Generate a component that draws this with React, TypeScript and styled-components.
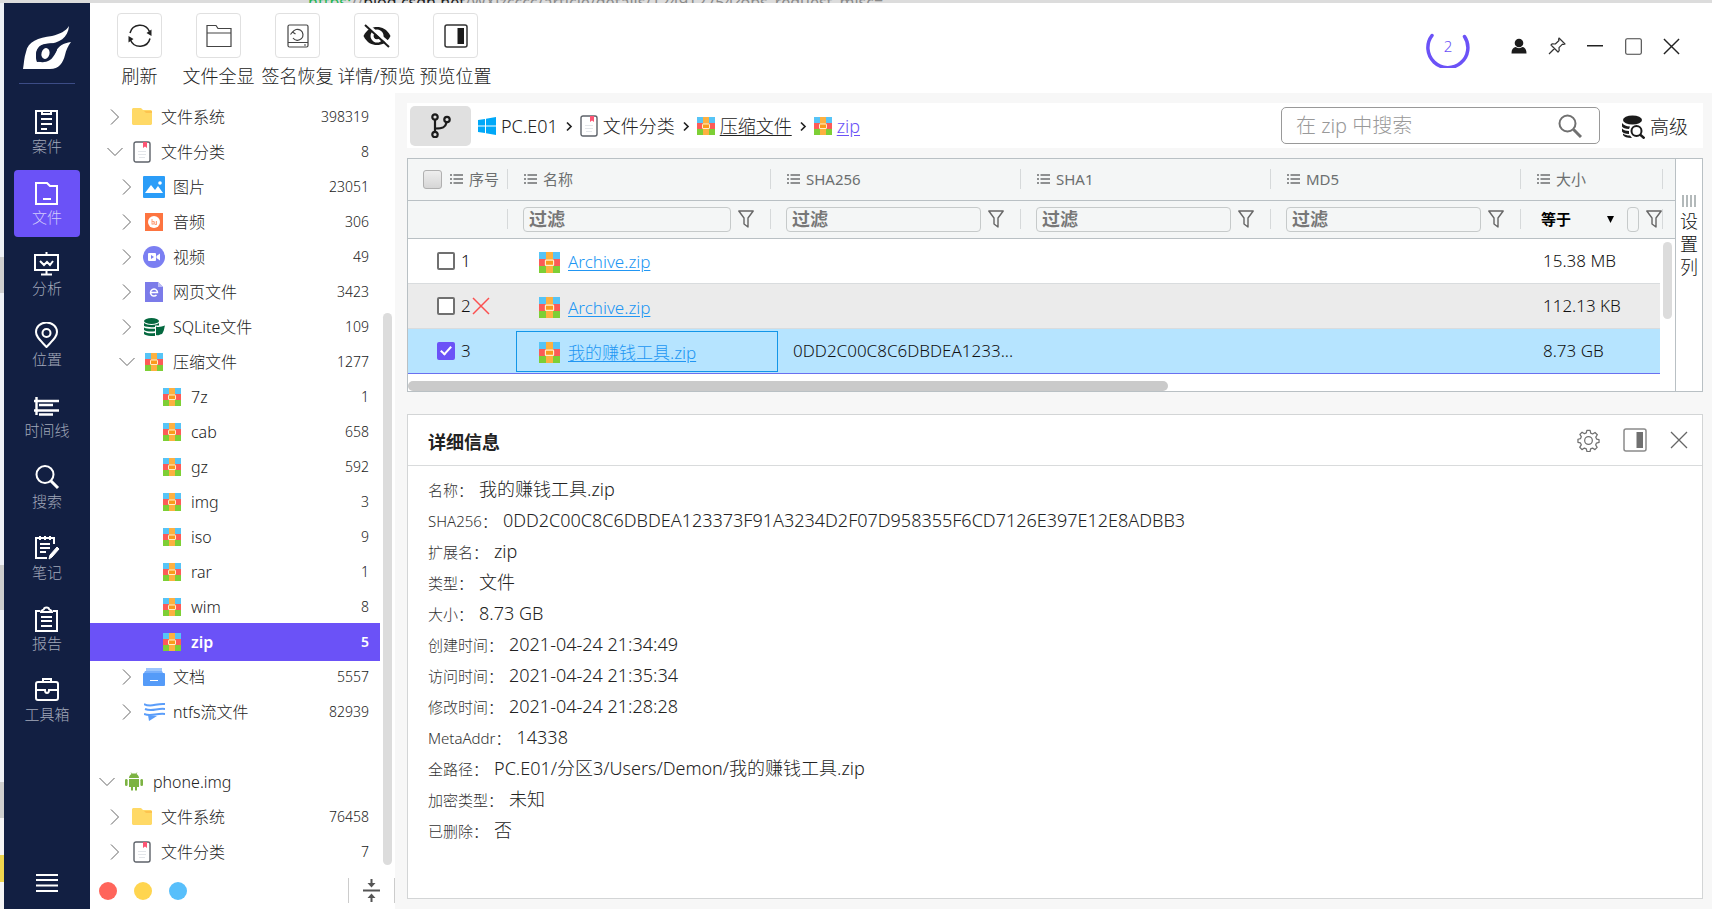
import React from "react";
import styled, { createGlobalStyle, css } from "styled-components";

const GlobalStyle = createGlobalStyle`
  *, *::before, *::after { box-sizing: border-box; }
  html, body, #root { height: 100%; }
  body {
    margin: 0;
    overflow: hidden;
    background: #eceff3;
    color: #222;
    font-family: "Noto Sans", "Noto Sans CJK SC", sans-serif;
    font-size: 17px;
    font-weight: 300;
    line-height: 24px;
  }
  button, input, select { font-family: inherit; font-weight: inherit; color: inherit; margin: 0; }
  button { background: none; border: 0; padding: 0; cursor: pointer; }
  a { color: inherit; }
  svg { display: block; flex: none; }
`;

/* ---------- shell ---------- */

const Desktop = styled.div`
  display: grid;
  grid-template-columns: 4px minmax(0, 1fr);
  grid-template-rows: 3px minmax(0, 1fr);
  height: 100vh;
`;

const BackdropTop = styled.div`
  grid-column: 1 / -1;
  display: flex;
  align-items: center;
  padding-left: 308px;
  overflow: hidden;
  background: #dcdcdc;
  color: #8a8a8a;
  font-size: 16px;
  font-weight: 400;
  line-height: 20px;
  white-space: nowrap;
`;
const Secure = styled.span`color: #1fb655;`;
const Host = styled.span`color: #222;`;

const BackdropLeft = styled.div`
  background: linear-gradient(
    #edf0f5 0 28%, #cfcfcf 28% 32%, #eef0f6 32% 62%, #cdcdcd 62% 67%,
    #eef0f6 67% 86%, #cfcfcf 86% 90%, #f5f5f5 90% 94%, #efd54e 94% 97%, #f5f5f5 97%
  );
`;

const Window = styled.div`
  display: grid;
  grid-template-columns: 86px minmax(0, 1fr);
  background: #fff;
  min-height: 0;
`;

/* ---------- left navigation ---------- */

const Nav = styled.nav`
  display: flex;
  flex-direction: column;
  align-items: center;
  background: #121f42;
  padding: 22px 0 14px;
`;
const Divider = styled.hr`
  width: 56px;
  margin: 12px 0 15px;
  border: 0;
  border-top: 1px solid #3c4c86;
`;
const NavList = styled.div`
  display: flex;
  flex-direction: column;
  gap: 4px;
  flex: 1;
`;
const NavButton = styled.button<{ $active?: boolean }>`
  display: flex;
  flex-direction: column;
  align-items: center;
  width: 66px;
  height: 67px;
  padding-top: 10px;
  border-radius: 4px;
  background: ${(p) => (p.$active ? "#6b52f7" : "transparent")};
  color: ${(p) => (p.$active ? "#d3ccfd" : "#a3a9ba")};
  font-size: 15px;
  line-height: 22px;
  white-space: nowrap;
`;

/* ---------- toolbar ---------- */

const Content = styled.div`
  display: flex;
  flex-direction: column;
  min-width: 0;
  min-height: 0;
`;
const Toolbar = styled.header`
  display: flex;
  justify-content: space-between;
  height: 90px;
  padding: 10px 32px 0 10px;
`;
const Tools = styled.div`display: flex;`;
const Tool = styled.button`
  display: flex;
  flex-direction: column;
  align-items: center;
  gap: 6px;
  width: 79px;
  font-size: 18px;
  line-height: 24px;
  white-space: nowrap;
`;
const ToolFrame = styled.span`
  display: grid;
  place-items: center;
  width: 45px;
  height: 45px;
  border: 1px solid #e0e0e0;
  border-radius: 4px;
`;
const WindowControls = styled.div`
  display: flex;
  align-items: center;
  gap: 20px;
  height: 66px;
`;
const IconButton = styled.button`
  display: grid;
  place-items: center;
  min-width: 18px;
  height: 24px;
`;
const Progress = styled.div`
  display: grid;
  place-items: center;
  width: 44px;
  height: 44px;
  margin-right: 20px;
  color: #6b52f7;
  font-size: 15px;
  > * { grid-area: 1 / 1; }
`;

/* ---------- tree ---------- */

const Work = styled.div`
  display: grid;
  grid-template-columns: 305px minmax(0, 1fr);
  flex: 1;
  min-height: 0;
`;
const TreePanel = styled.aside`
  display: flex;
  flex-direction: column;
  min-height: 0;
`;
const TreeScroll = styled.div`
  display: flex;
  flex: 1;
  min-height: 0;
  padding-top: 6px;
`;
const TreeList = styled.ul`
  flex: 1;
  margin: 0;
  padding: 0;
  list-style: none;
`;
const TreeRow = styled.li<{ $level: number; $active?: boolean; $after?: boolean }>`
  display: flex;
  align-items: center;
  height: 35px;
  padding: 0 11px 0 ${(p) => [9, 17, 29, 47][p.$level]}px;
  margin-top: ${(p) => (p.$after ? 35 : 0)}px;
  font-size: 16px;
  ${(p) =>
    p.$active &&
    css`
      height: 38px;
      margin: -1px 0 -2px;
      background: #6b52f7;
      color: #fff;
      font-weight: 600;
    `}
`;
const Twisty = styled.span`
  display: grid;
  place-items: center;
  width: 16px;
  height: 24px;
`;
const TreeIcon = styled.span`
  display: grid;
  place-items: center;
  width: 22px;
  margin: 0 8px;
`;
const TreeLabel = styled.span`flex: 1; white-space: nowrap;`;
const Count = styled.span`font-size: 14px;`;
const Track = styled.div`
  display: flex;
  flex-direction: column;
  justify-content: flex-end;
  width: 9px;
  margin: 0 3px;
  padding-bottom: 7px;
`;
const Thumb = styled.div`
  height: 72%;
  border-radius: 5px;
  background: #dcdcdc;
`;
const TreeFooter = styled.footer`
  display: flex;
  align-items: center;
  gap: 17px;
  height: 37px;
  padding-left: 9px;
`;
const Dot = styled.button<{ $color: string }>`
  width: 18px;
  height: 18px;
  border-radius: 50%;
  background: ${(p) => p.$color};
`;
const Collapse = styled.button`
  display: grid;
  place-items: center;
  width: 47px;
  height: 25px;
  margin-left: auto;
  border: solid #ccc;
  border-width: 0 1px;
`;

/* ---------- main column ---------- */

const Main = styled.main`
  display: flex;
  flex-direction: column;
  min-width: 0;
  padding: 10px 9px 10px 12px;
  background: #f7f7f7;
`;
const PathBar = styled.div`
  display: flex;
  align-items: center;
  height: 45px;
  padding: 0 15px 0 3px;
  background: #fff;
`;
const BranchButton = styled.button`
  display: grid;
  place-items: center;
  width: 61px;
  height: 40px;
  margin-right: 7px;
  border-radius: 5px;
  background: #e0e0e0;
`;
const Crumbs = styled.nav`
  display: flex;
  align-items: center;
  gap: 5px;
  flex: 1;
`;
const Crumb = styled.a<{ $tone?: "plain" | "link" | "current" }>`
  font-size: 18px;
  white-space: nowrap;
  text-decoration: ${(p) => (p.$tone === "plain" ? "none" : "underline")};
  text-underline-offset: 2px;
  color: ${(p) => (p.$tone === "current" ? "#6b52f7" : "#222")};
`;
const SearchBox = styled.label`
  display: flex;
  align-items: center;
  width: 319px;
  height: 37px;
  margin-right: 22px;
  padding: 0 17px 0 14px;
  border: 1px solid #999;
  border-radius: 5px;
`;
const SearchInput = styled.input`
  flex: 1;
  min-width: 0;
  border: 0;
  outline: 0;
  padding: 0;
  background: none;
  font-size: 20px;
  &::placeholder { color: #999; opacity: 1; }
`;
const Advanced = styled.button`
  display: flex;
  align-items: center;
  gap: 5px;
  padding-top: 2px;
  font-size: 19px;
  line-height: 26px;
`;

/* ---------- grid ---------- */

const GridBox = styled.section`
  display: flex;
  margin: 10px 0 22px;
  border: 1px solid #b9c0c4;
  background: #fff;
`;
const GridArea = styled.div`
  flex: 1;
  min-width: 0;
`;
const Table = styled.table`
  width: 100%;
  border-collapse: collapse;
  table-layout: fixed;
`;
const HeadRow = styled.tr<{ $filter?: boolean }>`
  height: ${(p) => (p.$filter ? 38 : 41)}px;
  background: #f4f6f6;
  color: #6c6f70;
  font-size: 15px;
  border-bottom: 1px solid #b9c0c4;
`;
const HeadCell = styled.th`
  padding: 0;
  font-weight: 400;
  text-align: left;
`;
const HeadInner = styled.div<{ $pad?: number }>`
  display: flex;
  align-items: center;
  gap: 6px;
  height: 20px;
  padding-left: ${(p) => p.$pad ?? 16}px;
  border-right: 1px solid #d6d9da;
  white-space: nowrap;
`;
const HeadCheck = styled.input`
  appearance: none;
  width: 19px;
  height: 19px;
  margin: 0 2px 0 0;
  border: 1px solid #b0b0b0;
  border-radius: 3px;
  background: linear-gradient(#eee, #d6d6d6);
`;
const FilterInner = styled.div<{ $size?: boolean }>`
  display: flex;
  align-items: center;
  gap: 7px;
  height: 20px;
  padding: ${(p) => (p.$size ? "0 0 0 20px" : "0 16px 0 15px")};
  border-right: 1px solid #d6d9da;
`;
const FilterInput = styled.input`
  flex: 1;
  min-width: 0;
  height: 25px;
  padding: 0 5px;
  border: 1px solid #c6caca;
  border-radius: 4px;
  background: #f4f6f6;
  font-size: 18px;
  font-weight: 700;
  &::placeholder { color: #777; opacity: 1; font-weight: 700; }
`;
const SmallInput = styled(FilterInput)`
  flex: none;
  width: 12px;
  padding: 0;
`;
const SelectWrap = styled.div`
  display: flex;
  align-items: center;
  flex: 1;
  min-width: 0;
  padding-right: 6px;
`;
const OpSelect = styled.select`
  appearance: none;
  flex: 1;
  min-width: 0;
  padding: 0;
  border: 0;
  background: none;
  color: #000;
  font-size: 15px;
  font-weight: 600;
`;
const GridBody = styled.div`
  display: flex;
  align-items: flex-start;
  gap: 3px;
`;
const Rows = styled.div`flex: 1; min-width: 0;`;
const VThumb = styled.div`
  width: 9px;
  height: 77px;
  margin: 3px 3px 0 0;
  border-radius: 5px;
  background: #dcdcdc;
`;
const HThumb = styled.div`
  width: 60%;
  height: 10px;
  margin-top: 7px;
  border-radius: 5px;
  background: #cacaca;
`;
const Row = styled.tr<{ $kind: "plain" | "alt" | "picked" }>`
  height: 45px;
  background: ${(p) => ({ plain: "#fff", alt: "#ebebeb", picked: "#b6e4ff" })[p.$kind]};
  border: solid ${(p) => (p.$kind === "picked" ? "#6a70f0" : "#d9dcde")};
  border-width: ${(p) => (p.$kind === "picked" ? "1px 0" : "0 0 1px")};
`;
const Cell = styled.td<{ $pad?: number }>`
  padding: 0 0 0 ${(p) => p.$pad ?? 15}px;
  overflow: hidden;
  text-overflow: ellipsis;
  white-space: nowrap;
  color: #111;
`;
const NumberCell = styled.div`
  display: flex;
  align-items: center;
  gap: 6px;
  > svg { margin-left: -5px; }
`;
const FileCell = styled.div<{ $focus?: boolean }>`
  display: flex;
  align-items: center;
  gap: 8px;
  height: 41px;
  padding: 3px 0 0 22px;
  border: 1px solid ${(p) => (p.$focus ? "#1295e8" : "transparent")};
`;
const FileLink = styled.a`
  color: #2196f3;
  text-underline-offset: 2px;
`;
const RowCheck = styled.input`
  appearance: none;
  display: grid;
  place-items: center;
  width: 18px;
  height: 18px;
  border: 2px solid #707070;
  border-radius: 2px;
  background: #fff;
  &:checked { border-color: #6b52f7; background: #6b52f7; }
  &:checked::after {
    content: "";
    width: 6px;
    height: 11px;
    margin-bottom: 3px;
    border: solid #fff;
    border-width: 0 2px 2px 0;
    transform: rotate(42deg);
  }
`;
const ColumnTab = styled.button`
  display: flex;
  flex-direction: column;
  align-items: center;
  width: 27px;
  padding-top: 36px;
  border-left: 1px solid #b9c0c4;
  color: #111;
  font-size: 18px;
  line-height: 23px;
  > svg { margin-bottom: 3px; }
`;

/* ---------- details ---------- */

const Details = styled.section`
  flex: 1;
  min-height: 0;
  border: 1px solid #d3d5d6;
  background: #fff;
`;
const DetailsHead = styled.header`
  display: flex;
  align-items: center;
  gap: 23px;
  height: 51px;
  padding: 0 14px 0 20px;
  border-bottom: 1px solid #d9dbdc;
`;
const DetailsTitle = styled.h2`
  flex: 1;
  margin: 4px 0 0;
  font-size: 18px;
  font-weight: 700;
  line-height: 24px;
`;
const Fields = styled.dl`
  margin: 0;
  padding: 8px 20px;
`;
const Field = styled.div`
  display: flex;
  align-items: baseline;
  gap: 6px;
  height: 31px;
  line-height: 31px;
  white-space: nowrap;
`;
const FieldName = styled.dt`font-size: 15px; color: #333;`;
const FieldValue = styled.dd`margin: 0; font-size: 18px;`;

/* ---------- drawings ---------- */

const stroke = (w: number, color = "currentColor") => ({
  fill: "none",
  stroke: color,
  strokeWidth: w,
});

const Logo = () => (
  <svg width="50" height="46" viewBox="0 0 50 46">
    <path fill="#fff" fillRule="evenodd" d="M47 1c-3 5-9 8-17 10C16 13 6 16 4 27c-2 6-2 11-3 17h27c9 0 13-6 15-14 1-5 3-9 6-13-8 1-12 4-15 9-4 8-8 11-19 11-1-2-1-4-1-6 0-8 5-12 12-12 11-1 20-6 21-18z" />
    <path fill="#fff" d="M34 25c-1-4-5-6-10-5-6 1-9 5-9 10 0 4 2 7 6 7 7 0 11-4 13-12z" />
    <path fill="#121f42" d="M35 20c-3-2-8-2-12-1-6 1-9 5-9 11 0 5 3 8 8 7 6 0 10-5 13-12z" />
    <ellipse cx="23.500" cy="28.500" rx="4" ry="5.500" fill="#fff" transform="rotate(15 23.500 28.500)" />
  </svg>
);

const navIcons: Record<string, React.ReactNode> = {
  案件: <><path d="M2 2h21v22H2zM8 2v3h9V2M7 10h11M7 15h11M7 20h6" /></>,
  文件: <><path d="M2 3h11l3 3h7v18H2zM9 19h8" /></>,
  分析: <><path d="M1 4h23v15H1zM12.500 1v3M12.500 19v4M7 23.500h11M6 10l4 4 3-3 3 3 3-4" /></>,
  位置: <><path d="M12.500 25C6 18 2 15 2 10a10.500 9.500 0 0 1 21 0c0 5-4 8-10.500 15z" /><circle cx="12.500" cy="11" r="4" /></>,
  时间线: <><path d="M2.500 4v18M0 8h25M5 12h14M0 17.500h25M5 21.500h14" strokeWidth="2.400" /></>,
  搜索: <><circle cx="11" cy="10.500" r="8.500" /><path d="M17 17l7 7" strokeWidth="3" /></>,
  笔记: <><path d="M20 9V3H2v20h11M6 1v4M11 1v4M16 1v4M6 9h10M6 13h10M6 17h6" /><path d="M15 24l1-4 7-8 2 2-7 8z" fill="#fff" strokeWidth="1" /></>,
  报告: <><path d="M6 5H2v20h21V5h-4M7 6c0-2 3-2 3-3 0-2 5-2 5 0 0 1 3 1 3 3zM7 11h11M7 15h11M7 20h11" /></>,
  工具箱: <><rect x="2" y="5" width="22" height="18" rx="2" /><path d="M9 5V2h8v3M2 13h9c0 4 4 4 4 0h9" /></>,
};
const NavIcon = ({ name }: { name: string }) => (
  <svg width="26" height="26" viewBox="0 0 26 26" {...stroke(2, "#fff")}>{navIcons[name]}</svg>
);

const ZipIcon = ({ size = 18 }: { size?: number }) => (
  <svg width={size} height={size} viewBox="0 0 18 18">
    <path fill="#56c4f6" d="M0 0h18v6H0z" />
    <path fill="#fc5b57" d="M0 6h18v6H0z" />
    <path fill="#7dcf35" d="M0 12h18v6H0z" />
    <path fill="#fdb040" d="M6 0h6v18H6z" />
    <rect x="5.500" y="7" width="7" height="4.500" rx=".5" fill="#fa9a1c" stroke="#fff0c8" />
  </svg>
);
const FolderIcon = () => (
  <svg width="20" height="17" viewBox="0 0 20 17">
    <path fill="#ffd966" d="M1 0h8l2 2h8l1 1v13l-1 1H1l-1-1V1z" />
    <path fill="#fbb13c" d="M12 3h8v2h-6z" opacity=".55" />
  </svg>
);
const BookIcon = () => (
  <svg width="18" height="22" viewBox="0 0 18 22">
    <rect x="1" y="1" width="16" height="20" rx="2" fill="#fff" stroke="#5d6269" strokeWidth="1.400" />
    <path fill="#fc5574" d="M10 1h4v6l-2-1.500L10 7z" />
    <path stroke="#e3e6ea" d="M5 10.500h8M5 13.500h8M6 16.500h6" />
  </svg>
);
const ImageIcon = () => (
  <svg width="22" height="22" viewBox="0 0 22 22">
    <rect width="22" height="22" rx="1" fill="#2b9df8" />
    <path fill="#fff" d="M2 17l6-8 4 5 3-4 5 7z" /><circle cx="17" cy="7" r="1.800" fill="#fff" />
  </svg>
);
const AudioIcon = () => (
  <svg width="18" height="18" viewBox="0 0 18 18">
    <path fill="#fd7440" d="M0 0h18v18H0z" /><circle cx="9" cy="9" r="6" fill="#fff" />
    <path {...stroke(1, "#fda07c")} d="M7 6v5.500M7 8.500h2v2.500H7M11.500 8v3.500M9.800 8.500v3h2" />
  </svg>
);
const VideoIcon = () => (
  <svg width="22" height="22" viewBox="0 0 22 22">
    <circle cx="11" cy="11" r="11" fill="#7b7ff2" />
    <rect x="5" y="7" width="8" height="8" rx="1" fill="#fff" /><path fill="#fff" d="M13.500 10L17 7.500v7L13.500 12z" />
    <path fill="#7b7ff2" d="M8 9l3 2-3 2z" />
  </svg>
);
const WebIcon = () => (
  <svg width="18" height="20" viewBox="0 0 18 20">
    <path fill="#7b7be9" d="M0 0h13l5 5v15H0z" /><path fill="#bcbcf6" d="M13 0l5 5h-5z" />
    <path {...stroke(1.500, "#fff")} d="M6 10.500h6.500a3.500 3.500 0 1 0-1 2.500" />
  </svg>
);
const DbIcon = () => (
  <svg width="21" height="18" viewBox="0 0 21 18">
    <g fill="#04683f"><ellipse cx="7.500" cy="3" rx="7.500" ry="3" />
      <path d="M0 5c3 2.500 12 2.500 15 0v2.500H11V9C7 9.500 2 9 0 8zM0 9.500c3 1.500 7 1.500 11 1.200v2.600C7 14 2 13.500 0 12zM0 13.500c3 2 7 2 11 1.500v3C6 18.300 1 17.500 0 16z" />
      <path d="M12 8.500c3 1.500 6-.5 9-1-1 3-.5 5-3 8.500-2 .5-4 2-6 1z" /></g>
  </svg>
);
const DocIcon = () => (
  <svg width="22" height="18" viewBox="0 0 22 18">
    <path fill="#9cc6fd" d="M3 0h16v4H3z" /><path fill="#78affb" d="M2 3h17l1 2H1z" />
    <rect y="5" width="22" height="13" rx="1" fill="#559bf8" /><path stroke="#fff" d="M7 12.500h8" />
  </svg>
);
const StreamIcon = () => (
  <svg width="21" height="19" viewBox="0 0 21 19" {...stroke(2, "#5a9dfa")}>
    <path d="M0 2c7 4 12-1 21 0M1 7c7 3 12-1 20 0M0 12c7 3 12-1 21 0" /><path fill="#5a9dfa" stroke="none" d="M4 13l9 1-8 5z" />
  </svg>
);
const AndroidIcon = () => (
  <svg width="18" height="19" viewBox="0 0 18 19" fill="#7cb342">
    <path d="M4 6c0-2 1-3 2.500-4L5.500 0l1.700 1.500h3.600L12.500 0l-1 2C13 3 14 4 14 6zM4 7h10v8h-2v3.500h-2V15H8v3.500H6V15H4z" />
    <rect y="7" width="2.600" height="7" rx="1.300" /><rect x="15.400" y="7" width="2.600" height="7" rx="1.300" />
  </svg>
);
const WindowsIcon = () => (
  <svg width="18" height="18" viewBox="0 0 18 18" fill="#00a8f8">
    <path d="M0 3l7-1v6.500H0zM8 1.800L18 0v8.500H8zM0 9.500h7V16l-7-1zM8 9.500h10V18L8 16.200z" />
  </svg>
);
const Chevron = ({ open }: { open?: boolean }) =>
  open ? (
    <svg width="16" height="10" viewBox="0 0 16 10" {...stroke(1, "#666")}><path d="M.5 1L8 8.500 15.500 1" /></svg>
  ) : (
    <svg width="10" height="16" viewBox="0 0 10 16" {...stroke(1, "#666")}><path d="M1 .5L8.500 8 1 15.500" /></svg>
  );
const SmallChevron = () => (
  <svg width="12" height="12" viewBox="0 0 12 12" {...stroke(1.700, "#222")}><path d="M4 2.500L8 6.500 4 10.500" /></svg>
);
const PanelIcon = ({ color, mark }: { color: string; mark: string }) => (
  <svg width="24" height="24" viewBox="0 0 24 24"><rect x="1" y="1" width="22" height="22" rx="2" {...stroke(1.500, color)} /><path fill={mark} d="M13.500 4H20v16h-6.500z" /></svg>
);
const ListIcon = () => (
  <svg width="13" height="12" viewBox="0 0 13 12" {...stroke(1.300, "#6c6f70")}><path d="M0 2h2M3.500 2H13M0 6h2M3.500 6H13M0 10h2M3.500 10H13" /></svg>
);
const Funnel = () => (
  <svg width="16" height="18" viewBox="0 0 16 18" {...stroke(1.400, "#666")}><path strokeLinejoin="round" d="M.8 1h14.400L10 8v9l-4-3V8z" /></svg>
);
const Cross = ({ size, color, w = 1.500 }: { size: number; color: string; w?: number }) => (
  <svg width={size} height={size} viewBox="0 0 18 18" {...stroke(w, color)}><path d="M1 1l16 16M17 1L1 17" /></svg>
);

const toolIcons = {
  refresh: <svg width="24" height="24" viewBox="0 0 24 24" {...stroke(1.500)}><path d="M2 9a10.300 10.300 0 0 1 19.500-1.500M22 14.500A10.300 10.300 0 0 1 2.500 16" /><path fill="currentColor" stroke="none" d="M23.500 5.500V12l-5-3zM.5 18.500V12l5 3z" /></svg>,
  folder: <svg width="26" height="24" viewBox="0 0 26 24" {...stroke(1.200, "#444")}><path d="M1 22.500v-21h9l2 3h13v18zM1 9h24" /></svg>,
  restore: <svg width="22" height="24" viewBox="0 0 22 24" {...stroke(1.200, "#444")}><rect x="1" y="1" width="20" height="22" rx="1.500" /><path d="M1 18.500h20M17 21h2M6 14a5.500 5.500 0 1 0-.5-5.500M3.500 10.500L5.500 8l3 2" /></svg>,
  hide: <svg width="28" height="24" viewBox="0 0 28 24"><path fill="#1b1b1b" fillRule="evenodd" d="M.5 12C4 5 9 3 14 3s10 2 13.500 9C24 19 19 21 14 21S4 19 .5 12zM14 5.500a6.500 6.500 0 1 0 .1 0zm0 3.200a3.300 3.300 0 1 1-.1 0z" /><path stroke="#fff" strokeWidth="3" d="M4 .5L28 21" /><path stroke="#1b1b1b" strokeWidth="2" d="M2 1l24 22" /></svg>,
  panel: <PanelIcon color="#333" mark="#1b1b1b" />,
};

/* ---------- data ---------- */

type Node = { level: number; icon: React.ReactNode; label: string; count?: string; open?: boolean; leaf?: boolean; active?: boolean; after?: boolean };
const nodes: Node[] = [
  { level: 1, icon: <FolderIcon />, label: "文件系统", count: "398319" },
  { level: 1, icon: <BookIcon />, label: "文件分类", count: "8", open: true },
  { level: 2, icon: <ImageIcon />, label: "图片", count: "23051" },
  { level: 2, icon: <AudioIcon />, label: "音频", count: "306" },
  { level: 2, icon: <VideoIcon />, label: "视频", count: "49" },
  { level: 2, icon: <WebIcon />, label: "网页文件", count: "3423" },
  { level: 2, icon: <DbIcon />, label: "SQLite文件", count: "109" },
  { level: 2, icon: <ZipIcon />, label: "压缩文件", count: "1277", open: true },
  ...([["7z", "1"], ["cab", "658"], ["gz", "592"], ["img", "3"], ["iso", "9"], ["rar", "1"], ["wim", "8"], ["zip", "5"]].map(
    ([label, count]) => ({ level: 3, icon: <ZipIcon />, label, count, leaf: true, active: label === "zip" })
  )),
  { level: 2, icon: <DocIcon />, label: "文档", count: "5557" },
  { level: 2, icon: <StreamIcon />, label: "ntfs流文件", count: "82939" },
  { level: 0, icon: <AndroidIcon />, label: "phone.img", open: true, after: true },
  { level: 1, icon: <FolderIcon />, label: "文件系统", count: "76458" },
  { level: 1, icon: <BookIcon />, label: "文件分类", count: "7" },
];

const files = [
  { id: 1, name: "Archive.zip", sha: "", size: "15.38 MB", kind: "plain" as const },
  { id: 2, name: "Archive.zip", sha: "", size: "112.13 KB", kind: "alt" as const, deleted: true },
  { id: 3, name: "我的赚钱工具.zip", sha: "0DD2C00C8C6DBDEA1233...", size: "8.73 GB", kind: "picked" as const },
];

const fields = [
  ["名称", "我的赚钱工具.zip"],
  ["SHA256", "0DD2C00C8C6DBDEA123373F91A3234D2F07D958355F6CD7126E397E12E8ADBB3"],
  ["扩展名", "zip"],
  ["类型", "文件"],
  ["大小", "8.73 GB"],
  ["创建时间", "2021-04-24 21:34:49"],
  ["访问时间", "2021-04-24 21:35:34"],
  ["修改时间", "2021-04-24 21:28:28"],
  ["MetaAddr", "14338"],
  ["全路径", "PC.E01/分区3/Users/Demon/我的赚钱工具.zip"],
  ["加密类型", "未知"],
  ["已删除", "否"],
];

const textColumns = ["名称", "SHA256", "SHA1", "MD5"];

/* ---------- sections ---------- */

const SideNav = () => (
  <Nav>
    <Logo />
    <Divider />
    <NavList>
      {Object.keys(navIcons).map((name) => (
        <NavButton key={name} $active={name === "文件"}>
          <NavIcon name={name} />
          {name}
        </NavButton>
      ))}
    </NavList>
    <IconButton aria-label="菜单">
      <svg width="22" height="18" viewBox="0 0 22 18" {...stroke(2, "#fff")}><path d="M0 1h22M0 6h22M0 11.500h22M0 17h22" /></svg>
    </IconButton>
  </Nav>
);

const TopBar = () => (
  <Toolbar>
    <Tools>
      {([["刷新", "refresh"], ["文件全显", "folder"], ["签名恢复", "restore"], ["详情/预览", "hide"], ["预览位置", "panel"]] as const).map(
        ([label, icon]) => (
          <Tool key={label}>
            <ToolFrame>{toolIcons[icon]}</ToolFrame>
            {label}
          </Tool>
        )
      )}
    </Tools>
    <WindowControls>
      <Progress>
        <svg width="44" height="44" viewBox="0 0 44 44" {...stroke(3.500)}><path strokeLinecap="round" d="M6 11.500a20 20 0 1 0 32.500 1" /></svg>
        <span>2</span>
      </Progress>
      <IconButton aria-label="用户">
        <svg width="16" height="16" viewBox="0 0 16 16" fill="#1b1b1b"><circle cx="8" cy="5" r="4.300" /><path d="M.5 15.500c0-4 1.500-6 4-6.500 2 1.500 5 1.500 7 0 2.500.5 4 2.500 4 6.500z" /></svg>
      </IconButton>
      <IconButton aria-label="置顶">
        <svg width="18" height="18" viewBox="0 0 18 18" {...stroke(1.200, "#333")}><path strokeLinejoin="round" d="M11 1l6 6-1.500.5-1-.3-3.500 3.500.2 3-1.200 1.300L3 8l1.300-1.200 3 .2L11 3.500l-.4-1zM6.500 11.500L1 17" /></svg>
      </IconButton>
      <IconButton aria-label="最小化">
        <svg width="16" height="2" viewBox="0 0 16 2"><path fill="#222" d="M0 0h16v1.500H0z" /></svg>
      </IconButton>
      <IconButton aria-label="最大化">
        <svg width="17" height="17" viewBox="0 0 17 17"><rect x=".7" y=".7" width="15.600" height="15.600" rx="1.500" {...stroke(1.100, "#444")} /></svg>
      </IconButton>
      <IconButton aria-label="关闭"><Cross size={17} color="#222" /></IconButton>
    </WindowControls>
  </Toolbar>
);

const Tree = () => (
  <TreePanel>
    <TreeScroll>
      <TreeList>
        {nodes.map((n, i) => (
          <TreeRow key={i} $level={n.level} $active={n.active} $after={n.after}>
            <Twisty>{!n.leaf && <Chevron open={n.open} />}</Twisty>
            <TreeIcon>{n.icon}</TreeIcon>
            <TreeLabel>{n.label}</TreeLabel>
            {n.count && <Count>{n.count}</Count>}
          </TreeRow>
        ))}
      </TreeList>
      <Track><Thumb /></Track>
    </TreeScroll>
    <TreeFooter>
      <Dot $color="#ff655b" aria-label="红色标记" />
      <Dot $color="#ffd54f" aria-label="黄色标记" />
      <Dot $color="#58bffb" aria-label="蓝色标记" />
      <Collapse aria-label="全部折叠">
        <svg width="17" height="23" viewBox="0 0 17 23"><path {...stroke(2, "#555")} d="M0 11.500h17M8.500 0v6M8.500 17v6" /><path fill="#555" d="M4.500 4h8l-4 4.500zM4.500 19h8l-4-4.500z" /></svg>
      </Collapse>
    </TreeFooter>
  </TreePanel>
);

const Path = () => (
  <PathBar>
    <BranchButton aria-label="路径">
      <svg width="20" height="25" viewBox="0 0 20 25" {...stroke(2.200, "#1b1b1b")}>
        <circle cx="4" cy="4" r="2.700" /><circle cx="4" cy="21.500" r="2.700" /><circle cx="16" cy="6.500" r="2.700" /><path d="M4 7v12M4.500 15.500c7 0 10-1 11-6" />
      </svg>
    </BranchButton>
    <Crumbs aria-label="当前位置">
      <WindowsIcon /><Crumb href="#pc" $tone="plain">PC.E01</Crumb><SmallChevron />
      <BookIcon /><Crumb href="#types" $tone="plain">文件分类</Crumb><SmallChevron />
      <ZipIcon /><Crumb href="#archives" $tone="link">压缩文件</Crumb><SmallChevron />
      <ZipIcon /><Crumb href="#zip" $tone="current">zip</Crumb>
    </Crumbs>
    <SearchBox>
      <SearchInput placeholder="在 zip 中搜索" aria-label="在 zip 中搜索" />
      <svg width="24" height="24" viewBox="0 0 24 24" {...stroke(2, "#707070")}><circle cx="9.500" cy="9.500" r="8" /><path strokeWidth="3" d="M15.500 15.500L23 23" /></svg>
    </SearchBox>
    <Advanced>
      <svg width="23" height="24" viewBox="0 0 23 24" fill="#1b1b1b">
        <ellipse cx="10.500" cy="5" rx="9.500" ry="4.500" /><path d="M0 8c2 2.500 4 3.300 8 3.500L7 14C3 14 1 13 0 11.500zM0 13.500c2 1.800 4 2.500 7 2.500v3c-4 0-6-1-7-2.500zM1 18.500c2 1.500 4 2 7 2l2 2.500c-5 0-8-1-9-3z" />
        <circle cx="14.500" cy="16" r="5" {...stroke(2, "#1b1b1b")} /><path {...stroke(2.400, "#1b1b1b")} d="M18 19.500l4.500 4" />
      </svg>
      高级
    </Advanced>
  </PathBar>
);

const FileGrid = () => (
  <GridBox>
    <GridArea>
      <Table>
        <colgroup>
          <col width="100" /><col /><col width="250" /><col width="250" /><col width="250" /><col width="142" /><col width="12" />
        </colgroup>
        <thead>
          <HeadRow>
            <HeadCell><HeadInner $pad={15}><HeadCheck type="checkbox" aria-label="全选" /><ListIcon />序号</HeadInner></HeadCell>
            {[...textColumns, "大小"].map((name) => (
              <HeadCell key={name}><HeadInner><ListIcon />{name}</HeadInner></HeadCell>
            ))}
            <HeadCell />
          </HeadRow>
          <HeadRow $filter>
            <HeadCell><HeadInner /></HeadCell>
            {textColumns.map((name) => (
              <HeadCell key={name}>
                <FilterInner><FilterInput placeholder="过滤" aria-label={"过滤 " + name} /><Funnel /></FilterInner>
              </HeadCell>
            ))}
            <HeadCell>
              <FilterInner $size>
                <SelectWrap>
                  <OpSelect aria-label="大小条件"><option>等于</option></OpSelect>
                  <svg width="7" height="7" viewBox="0 0 7 7"><path d="M0 0h7L3.500 7z" /></svg>
                </SelectWrap>
                <SmallInput aria-label="大小值" />
                <Funnel />
              </FilterInner>
            </HeadCell>
            <HeadCell />
          </HeadRow>
        </thead>
      </Table>
      <GridBody>
        <Rows>
          <Table>
            <colgroup>
              <col width="108" /><col /><col width="250" /><col width="250" /><col width="250" /><col width="132" />
            </colgroup>
            <tbody>
              {files.map((f) => (
                <Row key={f.id} $kind={f.kind}>
                  <Cell $pad={29}>
                    <NumberCell>
                      <RowCheck type="checkbox" defaultChecked={f.id === 3} aria-label={"选择 " + f.id} />
                      {f.id}
                      {f.deleted && <Cross size={18} color="#fb5050" />}
                    </NumberCell>
                  </Cell>
                  <Cell $pad={0}>
                    <FileCell $focus={f.id === 3}><ZipIcon size={21} /><FileLink href="#file">{f.name}</FileLink></FileCell>
                  </Cell>
                  <Cell>{f.sha}</Cell>
                  <Cell />
                  <Cell />
                  <Cell>{f.size}</Cell>
                </Row>
              ))}
            </tbody>
          </Table>
        </Rows>
        <VThumb />
      </GridBody>
      <HThumb />
    </GridArea>
    <ColumnTab aria-label="设置列">
      <svg width="14" height="12" viewBox="0 0 14 12" {...stroke(1.300, "#8b9496")}><path d="M1 0v12M5 0v12M9 0v12M13 0v12" /></svg>
      <span>设</span><span>置</span><span>列</span>
    </ColumnTab>
  </GridBox>
);

const DetailPanel = () => (
  <Details>
    <DetailsHead>
      <DetailsTitle>详细信息</DetailsTitle>
      <IconButton aria-label="设置">
        <svg width="23" height="23" viewBox="0 0 24 24" {...stroke(1.300, "#707070")}>
          <circle cx="12" cy="12" r="4" />
          <path strokeLinejoin="round" d="M10.300 1.500h3.400l.6 2.800 2 .9 2.500-1.600 2.400 2.400-1.600 2.500.9 2 2.500.5v3l-2.700.7-.8 2 1.500 2.500-2.300 2.300-2.500-1.600-2 .9-.6 2.700h-3.200l-.7-2.700-2-.9-2.500 1.600L2.900 19l1.600-2.500-.9-2-2.600-.6v-3.200l2.700-.7.8-2L3 5.600l2.300-2.200 2.500 1.500 1.900-.8z" />
        </svg>
      </IconButton>
      <IconButton aria-label="面板位置"><PanelIcon color="#8a8a8a" mark="#707070" /></IconButton>
      <IconButton aria-label="关闭详情"><Cross size={18} color="#666" w={1.300} /></IconButton>
    </DetailsHead>
    <Fields>
      {fields.map(([name, value]) => (
        <Field key={name}>
          <FieldName>{name}：</FieldName>
          <FieldValue>{value}</FieldValue>
        </Field>
      ))}
    </Fields>
  </Details>
);

export default function App() {
  return (
    <Desktop lang="zh-CN">
      <GlobalStyle />
      <BackdropTop aria-hidden="true">
        <Secure>https:</Secure>//<Host>blog.csdn.net</Host>/WXjzcccc/article/details/124912754?ops_request_misc=
      </BackdropTop>
      <BackdropLeft />
      <Window>
        <SideNav />
        <Content>
          <TopBar />
          <Work>
            <Tree />
            <Main>
              <Path />
              <FileGrid />
              <DetailPanel />
            </Main>
          </Work>
        </Content>
      </Window>
    </Desktop>
  );
}
